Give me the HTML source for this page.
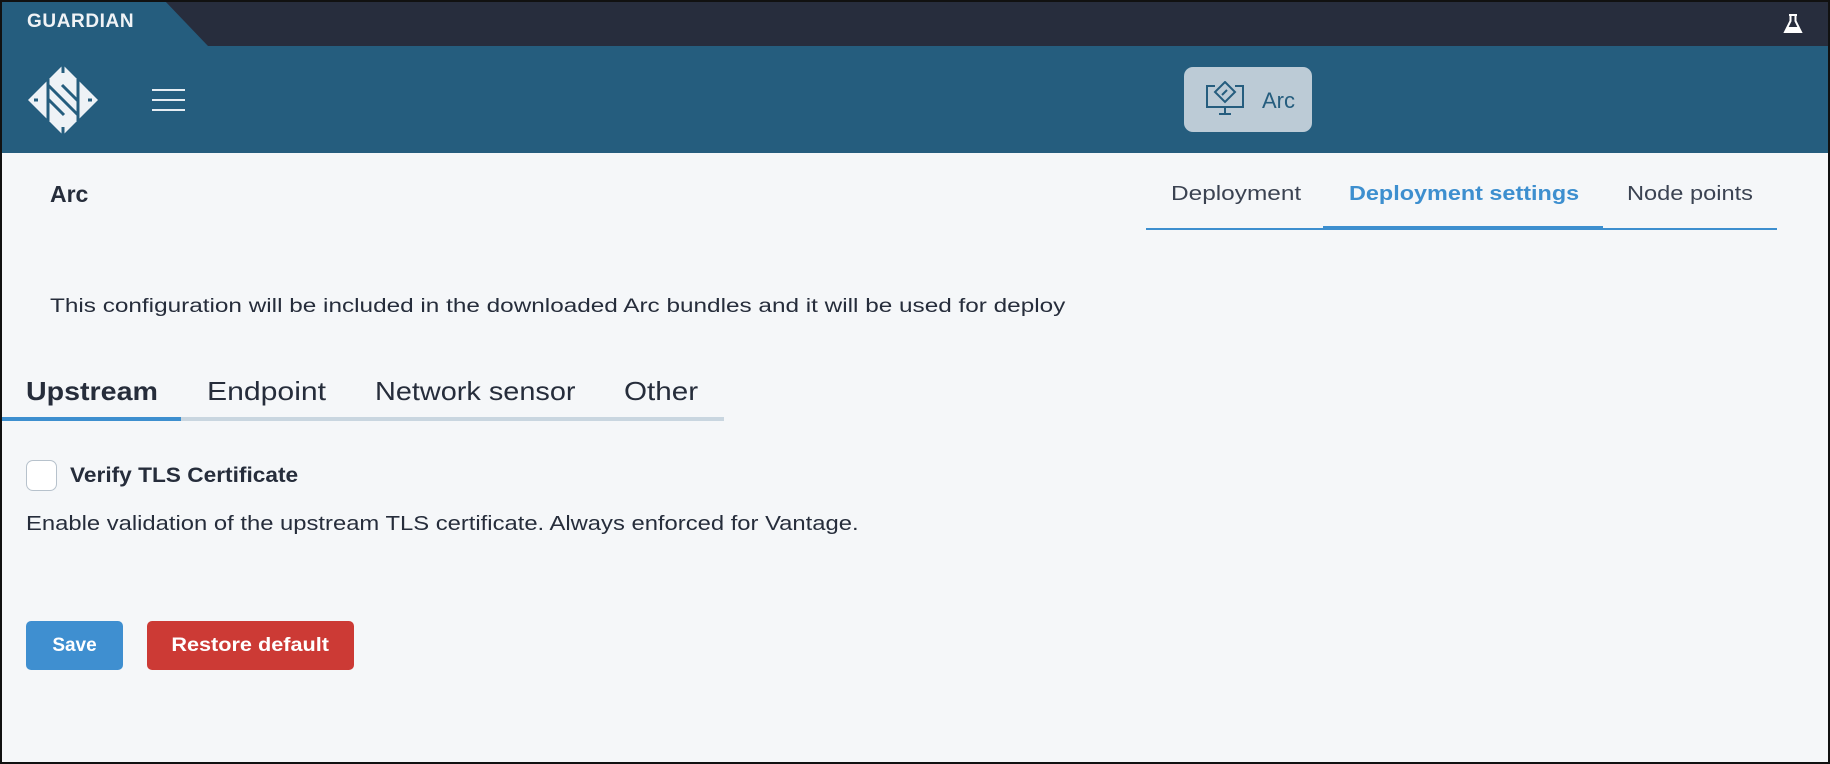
<!DOCTYPE html>
<html><head><meta charset="utf-8"><style>
*{box-sizing:border-box;margin:0;padding:0}
body{width:1830px;height:764px;overflow:hidden;background:#f5f7f9;font-family:"Liberation Sans",sans-serif;color:#262d3b;position:relative}
.frame{position:absolute;inset:0;border:2px solid #111;pointer-events:none;z-index:10}
.top{position:absolute;left:0;top:0;width:1830px;height:46px;background:#272d3d}
.tab{position:absolute;left:0;top:0;width:210px;height:46px;background:#255d7e;clip-path:polygon(0 0,164px 0,208px 46px,0 46px)}
.brand{position:absolute;left:27px;top:11px;color:#f0f3f6;font-weight:bold;font-size:19px;letter-spacing:.6px}
.hdr{position:absolute;left:0;top:46px;width:1830px;height:107px;background:#255d7e}
.abs{position:absolute}
.t{position:absolute;white-space:nowrap;transform-origin:left center}
.btn span{display:inline-block}
</style></head><body>
<div class="top"></div><div class="tab"></div><div class="brand">GUARDIAN</div>
<svg class="abs" style="left:1782px;top:13px" width="22" height="22" viewBox="0 0 22 22"><path d="M7 2h8M8.5 2v6L3 19h16L13.5 8V2" fill="none" stroke="#fff" stroke-width="2"/><path d="M5 14h12l2 5H3z" fill="#fff"/></svg>
<div class="hdr"></div>
<svg class="abs" style="left:26px;top:63px" width="74" height="74" viewBox="0 0 74 74">
<polygon points="37,2 72,37 37,72 2,37" fill="#eef2f6"/>
<g stroke="#255d7e" stroke-width="3" fill="none"><path d="M22 16v42M52 16v42M22 22l30 30M22 36l16 16M36 22l16 16M37 0v10M37 64v10M8 37h4M62 37h4"/></g>
</svg>
<div class="abs" style="left:152px;top:89px;width:33px;height:2px;background:#e6edf3"></div>
<div class="abs" style="left:152px;top:99px;width:33px;height:2px;background:#e6edf3"></div>
<div class="abs" style="left:152px;top:109px;width:33px;height:2px;background:#e6edf3"></div>
<div class="abs" style="left:1184px;top:67px;width:128px;height:65px;background:#bccbd6;border-radius:9px"></div>
<svg class="abs" style="left:1205px;top:81px" width="40" height="40" viewBox="0 0 40 40" fill="none" stroke="#255d7e" stroke-width="2"><path d="M10 5H2v21h36V5h-8M20 26v7M14 33h12"/><path d="M20 1l10 10-10 10-10-10z"/><path d="M17 14l5-5"/></svg>
<div class="t" style="left:1262px;top:88px;font-size:22px;color:#255d7e">Arc</div>
<div class="t" style="left:50px;top:181px;font-size:23px;font-weight:bold">Arc</div>
<div class="t" style="left:1171px;top:183px;font-size:20px;color:#3b4352;transform:scaleX(1.22)">Deployment</div>
<div class="t" style="left:1349px;top:183px;font-size:20px;font-weight:bold;color:#3d8fcf;transform:scaleX(1.17)">Deployment settings</div>
<div class="t" style="left:1627px;top:183px;font-size:20px;color:#3b4352;transform:scaleX(1.18)">Node points</div>
<div class="abs" style="left:1146px;top:228px;width:631px;height:2px;background:#3d8fcf"></div>
<div class="abs" style="left:1323px;top:226px;width:280px;height:4px;background:#3d8fcf"></div>
<div class="t" style="left:50px;top:296px;font-size:19px;transform:scaleX(1.28)">This configuration will be included in the downloaded Arc bundles and it will be used for deploy</div>
<div class="t" style="left:26px;top:376px;font-size:26px;font-weight:bold;transform:scaleX(1.1)">Upstream</div>
<div class="t" style="left:207px;top:376px;font-size:26px;transform:scaleX(1.16)">Endpoint</div>
<div class="t" style="left:375px;top:376px;font-size:26px;transform:scaleX(1.11)">Network sensor</div>
<div class="t" style="left:624px;top:376px;font-size:26px;transform:scaleX(1.14)">Other</div>
<div class="abs" style="left:0;top:417px;width:724px;height:4px;background:#c9d6e0"></div>
<div class="abs" style="left:0;top:417px;width:181px;height:4px;background:#3d8fcf"></div>
<div class="abs" style="left:26px;top:460px;width:31px;height:31px;border:1.5px solid #b7c2cc;border-radius:7px;background:#fff"></div>
<div class="t" style="left:70px;top:464px;font-size:21px;font-weight:bold;transform:scaleX(1.08)">Verify TLS Certificate</div>
<div class="t" style="left:26px;top:513px;font-size:20px;transform:scaleX(1.19)">Enable validation of the upstream TLS certificate. Always enforced for Vantage.</div>
<div class="abs btn" style="left:26px;top:621px;width:97px;height:49px;background:#3f8fd0;border-radius:5px;color:#fff;font-weight:bold;font-size:19px;text-align:center;line-height:49px">Save</div>
<div class="abs btn" style="left:147px;top:621px;width:207px;height:49px;background:#cc3a35;border-radius:5px;color:#fff;font-weight:bold;font-size:19px;text-align:center;line-height:49px"><span style="transform:scaleX(1.14)">Restore default</span></div>
<div class="frame"></div>
</body></html>
